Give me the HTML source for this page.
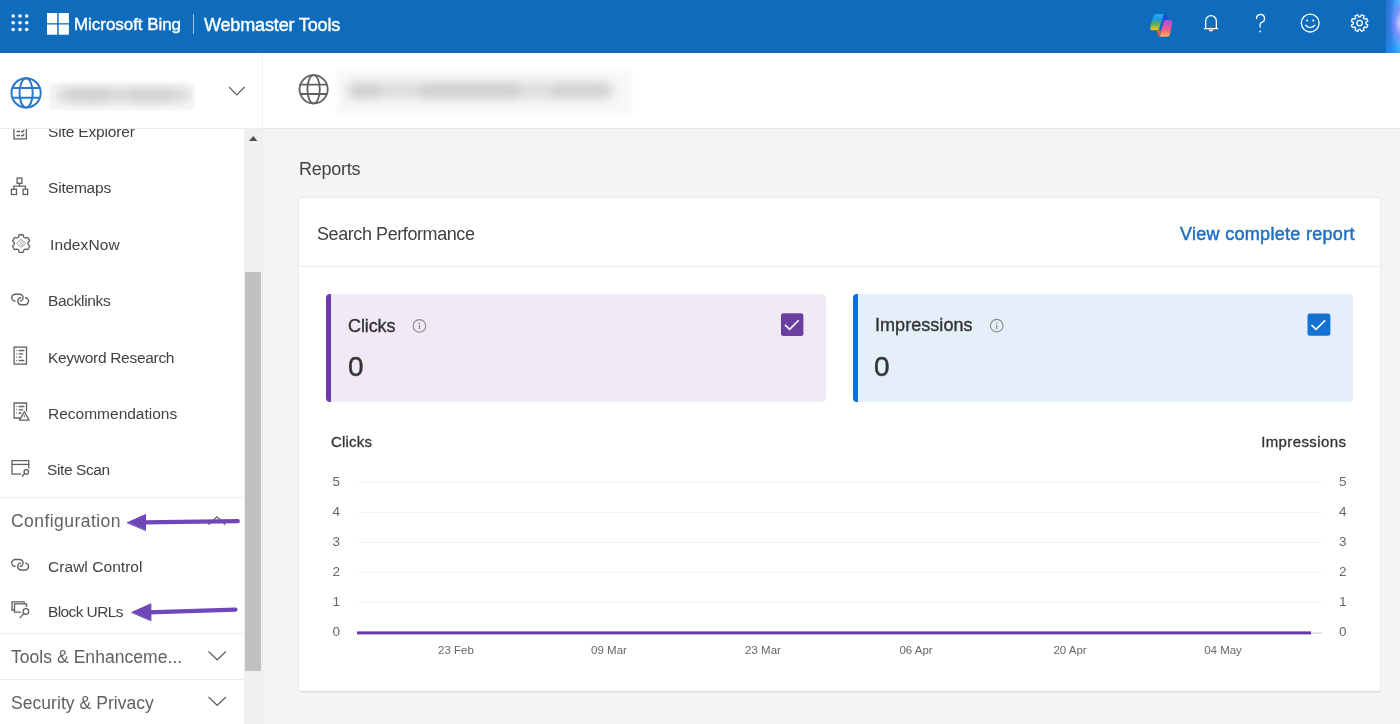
<!DOCTYPE html>
<html><head><meta charset="utf-8">
<style>
*{box-sizing:border-box;margin:0;padding:0}
html,body{width:1400px;height:724px;overflow:hidden;background:#f4f4f4;font-family:"Liberation Sans",sans-serif;position:relative}
.a{position:absolute;white-space:nowrap;will-change:transform}
#hdr{left:0;top:0;width:1400px;height:53px;background:#0f6cbd}
#edge{left:1386px;top:0;width:14px;height:53px;background:radial-gradient(ellipse 10px 24px at 100% 23px,rgba(210,205,255,.95) 0%,rgba(135,135,255,.7) 55%,rgba(130,130,255,0) 100%),linear-gradient(180deg,rgba(0,0,0,0) 60%,rgba(20,150,255,.5) 100%),linear-gradient(90deg,#2a70cc 0%,#3582e8 40%,#5cc2ff 100%)}
.txt{color:#424242}
</style></head><body>
<!-- header -->
<div id="hdr" class="a"></div>
<div id="edge" class="a"></div>
<svg class="a" style="left:0;top:0" width="400" height="53">
  <g fill="#fff">
    <circle cx="13.2" cy="16" r="1.8"/><circle cx="20" cy="16" r="1.8"/><circle cx="26.7" cy="16" r="1.8"/>
    <circle cx="13.2" cy="22.7" r="1.8"/><circle cx="20" cy="22.7" r="1.8"/><circle cx="26.7" cy="22.7" r="1.8"/>
    <circle cx="13.2" cy="29.5" r="1.8"/><circle cx="20" cy="29.5" r="1.8"/><circle cx="26.7" cy="29.5" r="1.8"/>
    <rect x="47" y="13" width="10.2" height="10.2"/><rect x="58.7" y="13" width="10.2" height="10.2"/>
    <rect x="47" y="24.5" width="10.2" height="10.2"/><rect x="58.7" y="24.5" width="10.2" height="10.2"/>
  </g>
  <rect x="193" y="14" width="1" height="20" fill="#9fc3e8"/>
</svg>
<div class="a" style="left:74px;top:14px;font-size:17px;color:#fff;line-height:22px;-webkit-text-stroke:0.4px #fff;letter-spacing:-0.05px">Microsoft Bing</div>
<div class="a" style="left:204px;top:14px;font-size:18px;color:#fff;line-height:22px;letter-spacing:-0.15px;-webkit-text-stroke:0.4px #fff">Webmaster Tools</div>

<!-- header right icons -->
<svg class="a" style="left:1140px;top:0" width="245" height="53">
  <defs>
    <linearGradient id="cpA" x1="0" y1="0" x2="0" y2="1"><stop offset="0" stop-color="#1fb0f8"/><stop offset=".3" stop-color="#1e96e8"/><stop offset=".62" stop-color="#5cad5a"/><stop offset="1" stop-color="#f8c800"/></linearGradient>
    <linearGradient id="cpB" x1="0" y1="0" x2="0" y2="1"><stop offset="0" stop-color="#a64fe6"/><stop offset=".55" stop-color="#f2588a"/><stop offset="1" stop-color="#ffb25c"/></linearGradient>
  </defs>
  <path d="M17 13.9H24.2L18.4 30.3H12.6Q9.6 30.3 10.2 27L13 17.5Q14 13.9 17 13.9Z" fill="url(#cpA)"/>
  <path d="M23.9 13.9H25.4Q27.4 13.9 27.6 16.5L27.9 20.1H25.2L20.4 28.5L21.2 24.5Z" fill="#1a4fd0"/>
  <path d="M16.8 30.2H20.6L19.8 36.8Q18.4 36.8 17.9 34.8Z" fill="#f25a30"/>
  <path d="M25.8 19.9H29.6Q32.6 19.9 32.1 23L30.2 33.6Q29.7 36.8 26.6 36.8H19.7L23.6 22.3Q24.2 19.9 25.8 19.9Z" fill="url(#cpB)"/>
  <g fill="none" stroke="#fff" stroke-width="1.3">
    <path d="M65.65 28.3V21a5.35 5.35 0 0 1 10.7 0v7.3"/>
    <path d="M63.9 28.6h14.3"/>
    <path d="M69.4 29.3a1.6 1.6 0 0 0 3.2 0"/>
    <path d="M116.5 18.5a4 4 0 1 1 5.2 3.8c-1 .4-1.6 1.1-1.6 2.2v2.6" stroke-linecap="round"/>
    <circle cx="170.2" cy="23.1" r="8.9"/>
    <path d="M165.5 25.2c2.5 3.2 6.9 3.2 9.4 0" stroke-linecap="round"/>
  </g>
  <circle cx="120.1" cy="31.4" r=".9" fill="#fff"/>
  <circle cx="167.1" cy="20.5" r="1.1" fill="#fff"/><circle cx="173.3" cy="20.5" r="1.1" fill="#fff"/>
  <g transform="translate(219.6 23.1)" fill="none" stroke="#fff" stroke-width="1.3" stroke-linejoin="round">
    <path d="M0.77 -6.25L1.87 -8.24L4.51 -7.15L3.88 -4.97L4.97 -3.88L7.15 -4.51L8.24 -1.87L6.25 -0.77L6.25 0.77L8.24 1.87L7.15 4.51L4.97 3.88L3.88 4.97L4.51 7.15L1.87 8.24L0.77 6.25L-0.77 6.25L-1.87 8.24L-4.51 7.15L-3.88 4.97L-4.97 3.88L-7.15 4.51L-8.24 1.87L-6.25 0.77L-6.25 -0.77L-8.24 -1.87L-7.15 -4.51L-4.97 -3.88L-3.88 -4.97L-4.51 -7.15L-1.87 -8.24L-0.77 -6.25Z"/>
    <circle r="2.7"/>
  </g>
</svg>

<!-- sidebar -->
<div class="a" style="left:0;top:53px;width:262px;height:75px;background:#fff"></div>
<div class="a" style="left:262px;top:53px;width:1px;height:75px;background:#f0f0f0"></div>
<div class="a" style="left:0;top:128px;width:263px;height:1px;background:#ebebeb"></div>
<div class="a" style="left:0;top:129px;width:244px;height:595px;background:#fff;overflow:hidden" id="side">
<svg class="a" style="left:0;top:0" width="244" height="595">
<g fill="none" stroke="#616161" stroke-width="1.3" transform="translate(0 -129)">
  <!-- site explorer -->
  <path d="M13.9 125v13.9h12.5V125"/>
  <path d="M16.5 131.5h3.5M16.5 135.5h3.5M21.3 131l1 1 2-2M21.3 135l1 1 2-2"/>
  <!-- sitemaps -->
  <rect x="17.1" y="178.1" width="4.8" height="5.2"/>
  <rect x="11.4" y="189.3" width="5.1" height="5.2"/>
  <rect x="23.1" y="189.3" width="4.6" height="5.2"/>
  <path d="M19.5 183.3v2.8M13.9 189.3v-3.2h11.5v3.2"/>
  <!-- indexnow gear -->
  <path d="M18.46 237.19L19.19 234.77L23.11 234.77L23.84 237.19L25.31 238.05L27.77 237.46L29.74 240.86L28.00 242.70L28.00 244.40L29.74 246.24L27.77 249.64L25.31 249.05L23.84 249.91L23.11 252.33L19.19 252.33L18.46 249.91L16.99 249.05L14.53 249.64L12.56 246.24L14.30 244.40L14.30 242.70L12.56 240.86L14.53 237.46L16.99 238.05Z" stroke-linejoin="round" stroke-width="1.3"/>
  <!-- backlinks -->
  <path transform="translate(0 -265.3)" d="M15.7 566.4H15.2A3.45 3.45 0 0 1 15.2 559.5H19.65A3.45 3.45 0 0 1 19.65 566.4M21.15 563.1A3.45 3.45 0 0 0 21.15 570H25.05A3.45 3.45 0 0 0 25.05 563.1" stroke-width="1.4"/>
  <!-- keyword -->
  <rect x="14.1" y="347.1" width="12.4" height="17"/>
  <path d="M18.6 350.5h5.8M18.6 353.9h4.6M18.6 357.2h3M18.6 360.5h5.8"/><path d="M16 350.5h.9M16 353.9h.9M16 357.2h.9M16 360.5h.9" stroke-width="1.1"/>
  <!-- recommendations -->
  <path d="M20.4 418h-6.3v-15h12.4v8.5"/>
  <path d="M18.6 406.5h5.8M18.6 409.8h4.6M18.6 413h2.8"/><path d="M16 406.5h.9M16 409.8h.9M16 413h.9" stroke-width="1.1"/>
  <path d="M24.3 411.7l-4.8 8.4h9.6z" stroke-linejoin="round"/>
  <path d="M24.3 415v2.3" stroke-width="1"/>
  <!-- site scan -->
  <path d="M21.2 474.2h-9.2v-13.6h16.8v8"/>
  <path d="M12 464.4h16.8"/>
  <circle cx="26.3" cy="471.9" r="2.2"/>
  <path d="M24.8 473.5l-2.8 3"/>
  <!-- crawl control -->
  <path transform="translate(0 0)" d="M15.7 566.4H15.2A3.45 3.45 0 0 1 15.2 559.5H19.65A3.45 3.45 0 0 1 19.65 566.4M21.15 563.1A3.45 3.45 0 0 0 21.15 570H25.05A3.45 3.45 0 0 0 25.05 563.1" stroke-width="1.4"/>
  <!-- block urls -->
  <path d="M14.4 610h-2.4v-8.1h12.2v1.6"/>
  <path d="M20.8 612.2h-6.3v-8.3h12v3.2"/>
  <circle cx="25.9" cy="611.5" r="2.8"/>
  <path d="M23.9 613.6l-4.3 4.5"/>
</g>
<g fill="none" stroke="#616161" stroke-width="1.2" transform="translate(0 -129)">
  <path d="M208.5 524.8l8.4-8 8.4 8"/>
  <path d="M208.5 651.5l8.7 8.3 8.7-8.3"/>
  <path d="M208.5 697l8.7 8.3 8.7-8.3"/>
</g>
<g transform="translate(0 -129)" fill="none" stroke="#a0a0a0" stroke-width="1" stroke-linejoin="round"><path d="M16.7 243.4L21.2 239.1L25.7 243.4L21.2 247.5Z"/><path d="M19.8 241.4L21.9 243.4L19.8 245.4"/><path d="M21.6 240.6L23.6 243.4L21.6 246.2" stroke="#b5b5b5"/></g>
</svg>
<div class="a" style="left:47.7px;top:-4.8px;font-size:15.5px;line-height:15.5px;color:#424242;letter-spacing:-0.15px">Site Explorer</div>
<div class="a" style="left:47.5px;top:51.4px;font-size:15.5px;line-height:15.5px;color:#424242;letter-spacing:-0.2px">Sitemaps</div>
<div class="a" style="left:50.0px;top:108.1px;font-size:15.5px;line-height:15.5px;color:#424242;letter-spacing:0.1px">IndexNow</div>
<div class="a" style="left:48.0px;top:164.1px;font-size:15.5px;line-height:15.5px;color:#424242;letter-spacing:-0.35px">Backlinks</div>
<div class="a" style="left:48.0px;top:220.5px;font-size:15.5px;line-height:15.5px;color:#424242;letter-spacing:-0.3px">Keyword Research</div>
<div class="a" style="left:48.0px;top:276.8px;font-size:15.5px;line-height:15.5px;color:#424242;letter-spacing:0px">Recommendations</div>
<div class="a" style="left:47.1px;top:333.2px;font-size:15.5px;line-height:15.5px;color:#424242;letter-spacing:-0.4px">Site Scan</div>
<div class="a" style="left:47.6px;top:430.2px;font-size:15.5px;line-height:15.5px;color:#424242;letter-spacing:0.05px">Crawl Control</div>
<div class="a" style="left:47.6px;top:475.2px;font-size:15.5px;line-height:15.5px;color:#424242;letter-spacing:-0.6px">Block URLs</div>
<div class="a" style="left:10.8px;top:383.5px;font-size:17.5px;line-height:17.5px;color:#616161;letter-spacing:0.45px">Configuration</div>
<div class="a" style="left:10.9px;top:520.1px;font-size:17.5px;line-height:17.5px;color:#616161;letter-spacing:0.05px">Tools &amp; Enhanceme...</div>
<div class="a" style="left:10.8px;top:565.5px;font-size:17.5px;line-height:17.5px;color:#616161;letter-spacing:0.05px">Security &amp; Privacy</div>
<div class="a" style="left:0;top:368px;width:244px;height:1px;background:#ebebeb"></div>
<div class="a" style="left:0;top:504px;width:244px;height:1px;background:#ebebeb"></div>
<div class="a" style="left:0;top:550px;width:244px;height:1px;background:#ebebeb"></div>
</div>
<div class="a" style="left:244px;top:129px;width:18px;height:595px;background:#f0f0f0"></div>
<div class="a" style="left:262px;top:129px;width:1px;height:595px;background:#ececec"></div>
<div class="a" style="left:245px;top:272px;width:16px;height:399px;background:#c1c1c1"></div>
<svg class="a" style="left:244px;top:129px" width="18" height="16"><path d="M5 12h8.5l-4.25-5z" fill="#505050"/></svg>

<!-- site selector -->
<svg class="a" style="left:0;top:53px" width="262" height="75">
  <g fill="none" stroke="#2878cf" stroke-width="2">
    <circle cx="26.1" cy="39.9" r="14.6"/>
    <ellipse cx="26.1" cy="39.9" rx="6.6" ry="14.6"/>
    <path d="M12.8 35h26.6M12.8 44.7h26.6"/>
  </g>
  <path d="M229 34l7.8 8 7.8-8" fill="none" stroke="#616161" stroke-width="1.2"/>
</svg>
<div class="a" style="left:49px;top:83px;width:145px;height:27px;background:#f6f6f6;filter:blur(1px)"></div>
<div class="a" style="left:56px;top:88px;width:134px;height:14px;border-radius:7px;background:#d8d8d8;filter:blur(5px)"></div>
<div class="a" style="left:70px;top:90px;width:40px;height:10px;border-radius:5px;background:#d2d2d2;filter:blur(4px)"></div>
<div class="a" style="left:130px;top:90px;width:40px;height:10px;border-radius:5px;background:#d4d4d4;filter:blur(4px)"></div>


<!-- main -->
<div class="a" style="left:263px;top:53px;width:1137px;height:75px;background:#fff"></div>
<div class="a" style="left:263px;top:128px;width:1137px;height:1px;background:#e9e9e9"></div>
<svg class="a" style="left:290px;top:65px" width="50" height="50">
  <g fill="none" stroke="#616161" stroke-width="1.8">
    <circle cx="23.6" cy="24.3" r="14.1"/>
    <ellipse cx="23.6" cy="24.3" rx="6.2" ry="14.1"/>
    <path d="M10.5 19.6h26.2M10.5 29h26.2"/>
  </g>
</svg>
<div class="a" style="left:338px;top:71px;width:293px;height:43px;background:#f8f8f8;filter:blur(2px)"></div>
<div class="a" style="left:346px;top:83px;width:268px;height:15px;border-radius:7px;background:#d9d9d9;filter:blur(6px)"></div>
<div class="a" style="left:352px;top:85px;width:28px;height:11px;border-radius:5px;background:#d0d0d0;filter:blur(4.5px)"></div>
<div class="a" style="left:420px;top:85px;width:100px;height:11px;border-radius:5px;background:#cfcfcf;filter:blur(4.5px)"></div>
<div class="a" style="left:552px;top:85px;width:56px;height:11px;border-radius:5px;background:#d2d2d2;filter:blur(4.5px)"></div>
<div class="a" style="left:299.0px;top:159.8px;font-size:18px;line-height:18px;color:#424242;letter-spacing:-0.27px">Reports</div>
<div class="a" style="left:299px;top:197.5px;width:1081px;height:492.5px;background:#fff;border-radius:3px;box-shadow:0 0.5px 2px rgba(0,0,0,.14)"></div>
<div class="a" style="left:299px;top:266px;width:1081px;height:1px;background:#efedeb"></div>
<div class="a" style="left:316.9px;top:224.6px;font-size:18px;line-height:18px;color:#424242;letter-spacing:-0.42px">Search Performance</div>
<div class="a" style="left:1180.3px;top:225.4px;font-size:18px;line-height:18px;color:#1f70c1;letter-spacing:0.3px;-webkit-text-stroke:0.5px #1f70c1;">View complete report</div>
<div class="a" style="left:326px;top:294px;width:500px;height:108px;background:#efeaf5;border-radius:4px;border-left:5px solid #6a3da8"></div>
<div class="a" style="left:853px;top:294px;width:499.5px;height:108px;background:#e4eff9;border-radius:4px;border-left:5px solid #0c70d4"></div>
<div class="a" style="left:348.3px;top:316.8px;font-size:18px;line-height:18px;color:#323232;letter-spacing:-0.1px;-webkit-text-stroke:0.35px #323232;">Clicks</div>
<div class="a" style="left:875.1px;top:316.4px;font-size:18px;line-height:18px;color:#323232;letter-spacing:0.05px;-webkit-text-stroke:0.35px #323232;">Impressions</div>
<div class="a" style="left:347.6px;top:353.1px;font-size:28px;line-height:28px;color:#323232;letter-spacing:0px;-webkit-text-stroke:0.4px #323232;">0</div>
<div class="a" style="left:874.4px;top:352.8px;font-size:28px;line-height:28px;color:#323232;letter-spacing:0px;-webkit-text-stroke:0.4px #323232;">0</div>
<svg class="a" style="left:400px;top:310px" width="620" height="30">
  <g fill="none" stroke="#8a8a8a" stroke-width="1.1"><circle cx="19.4" cy="15.9" r="6.3"/><circle cx="596.7" cy="15.7" r="6.3"/></g>
  <g fill="#8a8a8a"><circle cx="19.4" cy="13.2" r=".8"/><rect x="18.8" y="15" width="1.2" height="4.3"/><circle cx="596.7" cy="13" r=".8"/><rect x="596.1" y="14.8" width="1.2" height="4.3"/></g>
</svg>
<svg class="a" style="left:780px;top:312px" width="26" height="26"><rect x="1" y="1.3" width="22.4" height="22.6" rx="2.5" fill="#6b3fa0"/><path d="M5 12.9l4.6 4.4 9.1-9.1" fill="none" stroke="#fff" stroke-width="1.6"/></svg>
<svg class="a" style="left:1306px;top:312px" width="26" height="26"><rect x="1.5" y="1.6" width="22.9" height="22.2" rx="2.5" fill="#1473d0"/><path d="M5.5 13l4.6 4.4 9.1-9.1" fill="none" stroke="#fff" stroke-width="1.6"/></svg>
<div class="a" style="left:331.4px;top:433.8px;font-size:15px;line-height:15px;color:#323232;letter-spacing:0.2px;-webkit-text-stroke:0.3px #323232;">Clicks</div>
<div class="a" style="left:1199px;width:147.4px;text-align:right;top:433.8px;font-size:15px;line-height:15px;color:#323232;letter-spacing:0.4px;-webkit-text-stroke:0.3px #323232">Impressions</div>
<svg class="a" style="left:299px;top:420px" width="1081" height="260">
<rect x="58" y="62" width="965" height="1" fill="#f4f4f4"/>
<rect x="58" y="92" width="965" height="1" fill="#f4f4f4"/>
<rect x="58" y="122" width="965" height="1" fill="#f4f4f4"/>
<rect x="58" y="152" width="965" height="1" fill="#f4f4f4"/>
<rect x="58" y="182" width="965" height="1" fill="#f4f4f4"/>
<rect x="58" y="212.5" width="965" height="1.2" fill="#d0d0d0"/>
<rect x="58" y="211.4" width="954" height="3" fill="#6538ad"/>
</svg>
<div class="a" style="left:325px;width:15px;text-align:right;top:473.5px;font-size:13.5px;line-height:15px;color:#666">5</div>
<div class="a" style="left:1339px;top:473.5px;font-size:13.5px;line-height:15px;color:#666">5</div>
<div class="a" style="left:325px;width:15px;text-align:right;top:503.5px;font-size:13.5px;line-height:15px;color:#666">4</div>
<div class="a" style="left:1339px;top:503.5px;font-size:13.5px;line-height:15px;color:#666">4</div>
<div class="a" style="left:325px;width:15px;text-align:right;top:533.5px;font-size:13.5px;line-height:15px;color:#666">3</div>
<div class="a" style="left:1339px;top:533.5px;font-size:13.5px;line-height:15px;color:#666">3</div>
<div class="a" style="left:325px;width:15px;text-align:right;top:563.5px;font-size:13.5px;line-height:15px;color:#666">2</div>
<div class="a" style="left:1339px;top:563.5px;font-size:13.5px;line-height:15px;color:#666">2</div>
<div class="a" style="left:325px;width:15px;text-align:right;top:593.5px;font-size:13.5px;line-height:15px;color:#666">1</div>
<div class="a" style="left:1339px;top:593.5px;font-size:13.5px;line-height:15px;color:#666">1</div>
<div class="a" style="left:325px;width:15px;text-align:right;top:624.0px;font-size:13.5px;line-height:15px;color:#666">0</div>
<div class="a" style="left:1339px;top:624.0px;font-size:13.5px;line-height:15px;color:#666">0</div>
<div class="a" style="left:415.9px;width:80px;text-align:center;top:643px;font-size:11.5px;line-height:14px;color:#666">23 Feb</div>
<div class="a" style="left:569.3px;width:80px;text-align:center;top:643px;font-size:11.5px;line-height:14px;color:#666">09 Mar</div>
<div class="a" style="left:722.8px;width:80px;text-align:center;top:643px;font-size:11.5px;line-height:14px;color:#666">23 Mar</div>
<div class="a" style="left:876.2px;width:80px;text-align:center;top:643px;font-size:11.5px;line-height:14px;color:#666">06 Apr</div>
<div class="a" style="left:1029.7px;width:80px;text-align:center;top:643px;font-size:11.5px;line-height:14px;color:#666">20 Apr</div>
<div class="a" style="left:1183.2px;width:80px;text-align:center;top:643px;font-size:11.5px;line-height:14px;color:#666">04 May</div>
<svg class="a" style="left:0;top:0" width="263" height="724">
  <g fill="#6f47b8" stroke="#6f47b8" stroke-linejoin="round" stroke-linecap="round">
    <path d="M143 522.3L237.8 521.2" stroke-width="4.2" fill="none"/>
    <path d="M127.5 522.6L145.5 514.6V530.1z" stroke-width="1"/>
    <path d="M148 612.3L235.5 609.6" stroke-width="4.2" fill="none"/>
    <path d="M132 612.3L150.9 603.8V620.4z" stroke-width="1"/>
  </g>
</svg>
</body></html>
